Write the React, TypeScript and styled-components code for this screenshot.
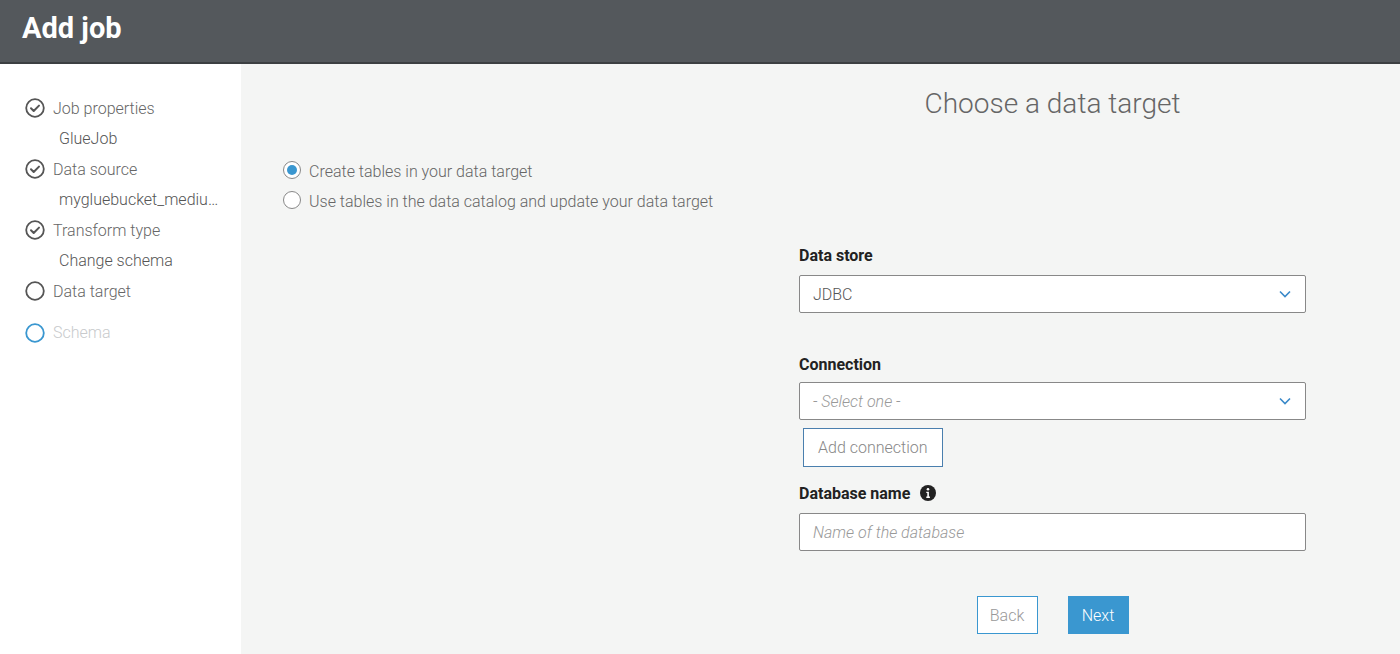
import styled, { createGlobalStyle } from 'styled-components'

const GlobalStyle = createGlobalStyle`
  html, body {
    margin: 0;
    padding: 0;
    background: #f4f5f4;
    font-family: Roboto, "Liberation Sans", sans-serif;
    font-weight: 300;
  }
`

const Page = styled.div`
  display: flex;
  flex-direction: column;
  height: 654px;
  overflow: hidden;
`

const Header = styled.header`
  display: flex;
  align-items: center;
  height: 62px;
  padding: 0 22px;
  background-color: #54585c;
  border-bottom: 2px solid #3c3f42;
  flex-shrink: 0;
`

const HeaderTitle = styled.h1`
  margin: 0 0 6px;
  font-size: 29px;
  font-weight: 700;
  color: #fff;
`

const Body = styled.div`
  display: flex;
  flex: 1;
`

const Sidebar = styled.nav`
  width: 241px;
  background: #fff;
  padding-top: 29px;
  flex-shrink: 0;
`

const StepList = styled.ul`
  list-style: none;
  margin: 0;
  padding: 0 0 0 25px;
`

const Step = styled.li<{ $active?: boolean }>`
  display: flex;
  align-items: center;
  gap: 8px;
  height: 30.5px;
  font-size: 16px;
  color: ${p => (p.$active ? '#c8cacc' : '#666')};
  margin-top: ${p => (p.$active ? '11px' : '0')};
`

const StepSub = styled.li`
  height: 30.5px;
  line-height: 30.5px;
  padding-left: 34px;
  font-size: 16px;
  color: #555;
  white-space: nowrap;
  overflow: hidden;
  text-overflow: ellipsis;
  width: 168px;
`

const Main = styled.main`
  flex: 1;
  padding-top: 22px;
`

const Column = styled.div`
  width: 507px;
  margin-left: 558px;
`

const Title = styled.h2`
  margin: 0;
  text-align: center;
  font-size: 28px;
  font-weight: 300;
  line-height: 36px;
  color: #666;
  white-space: nowrap;
`

const RadioGroup = styled.div`
  display: flex;
  flex-direction: column;
  padding: 34px 0 0 42px;
`

const RadioRow = styled.label`
  display: flex;
  align-items: center;
  gap: 8px;
  height: 30px;
  font-size: 16px;
  color: #666;
`

const RadioDot = styled.span<{ $checked?: boolean }>`
  box-sizing: border-box;
  width: 18px;
  height: 18px;
  border-radius: 50%;
  border: 1px solid #888;
  background: #fff;
  display: flex;
  align-items: center;
  justify-content: center;
  margin-top: -2px;
  &::after {
    content: '';
    width: 10px;
    height: 10px;
    border-radius: 50%;
    background: ${p => (p.$checked ? '#3a97d0' : 'transparent')};
  }
`

const Form = styled(Column)`
  padding-top: 29px;
`

const Field = styled.div<{ $gap?: number }>`
  margin-bottom: ${p => p.$gap ?? 0}px;
`

const Label = styled.div<{ $mb?: number }>`
  display: flex;
  align-items: center;
  gap: 10px;
  font-size: 16px;
  font-weight: 700;
  color: #222;
  height: 20px;
  margin-bottom: ${p => p.$mb ?? 10}px;
`

const Box = styled.div<{ $placeholder?: boolean }>`
  box-sizing: border-box;
  display: flex;
  align-items: center;
  justify-content: space-between;
  height: 38px;
  padding: 0 14px 0 13px;
  background: #fff;
  border: 1px solid #888;
  border-radius: 2px;
  font-size: 16px;
  color: ${p => (p.$placeholder ? '#999' : '#555')};
  font-style: ${p => (p.$placeholder ? 'italic' : 'normal')};
`

const OutlineButton = styled.button`
  box-sizing: border-box;
  height: 39px;
  padding: 0 14px;
  margin: 8px 0 0 4px;
  background: #fff;
  border: 1px solid #4a7fae;
  font-family: inherit;
  font-weight: 300;
  font-size: 16px;
  color: #888;
`

const Actions = styled.div`
  display: flex;
  justify-content: center;
  gap: 30px;
  margin-top: 45px;
`

const ActionButton = styled.button<{ $primary?: boolean }>`
  box-sizing: border-box;
  width: 61px;
  height: 38px;
  border: 1px solid #3a97d0;
  background: ${p => (p.$primary ? '#3a97d0' : '#fff')};
  color: ${p => (p.$primary ? '#fff' : '#999')};
  font-family: inherit;
  font-weight: 300;
  font-size: 16px;
`

const CheckCircle = () => (
  <svg width="20" height="20" viewBox="0 0 20 20">
    <circle cx="10" cy="10" r="8.8" fill="none" stroke="#555" strokeWidth="1.8" />
    <path d="M6 10.3l2.7 2.7 5.3-5.4" fill="none" stroke="#555" strokeWidth="2" strokeLinecap="round" strokeLinejoin="round" />
  </svg>
)

const EmptyCircle = ({ color }: { color: string }) => (
  <svg width="20" height="20" viewBox="0 0 20 20">
    <circle cx="10" cy="10" r="8.8" fill="none" stroke={color} strokeWidth="1.8" />
  </svg>
)

const Chevron = () => (
  <svg width="12" height="8" viewBox="0 0 12 8">
    <path d="M1 1.5l5 5 5-5" fill="none" stroke="#3a89c9" strokeWidth="1.6" />
  </svg>
)

const InfoIcon = () => (
  <svg width="16" height="16" viewBox="0 0 16 16">
    <circle cx="8" cy="8" r="8" fill="#222" />
    <circle cx="8" cy="4.3" r="1.3" fill="#fff" />
    <path d="M6.3 6.7h2.6v4.9h1v1.4H6.3v-1.4h1v-3.5h-1z" fill="#fff" />
  </svg>
)

export default function App() {
  return (
    <Page>
      <GlobalStyle />
      <Header>
        <HeaderTitle>Add job</HeaderTitle>
      </Header>
      <Body>
        <Sidebar>
          <StepList>
            <Step><CheckCircle />Job properties</Step>
            <StepSub>GlueJob</StepSub>
            <Step><CheckCircle />Data source</Step>
            <StepSub>mygluebucket_medium_data</StepSub>
            <Step><CheckCircle />Transform type</Step>
            <StepSub>Change schema</StepSub>
            <Step><EmptyCircle color="#555" />Data target</Step>
            <Step $active><EmptyCircle color="#3a97d0" />Schema</Step>
          </StepList>
        </Sidebar>
        <Main>
          <Column>
            <Title>Choose a data target</Title>
          </Column>
          <RadioGroup>
            <RadioRow><RadioDot $checked />Create tables in your data target</RadioRow>
            <RadioRow><RadioDot />Use tables in the data catalog and update your data target</RadioRow>
          </RadioGroup>
          <Form>
            <Field $gap={41}>
              <Label>Data store</Label>
              <Box>JDBC<Chevron /></Box>
            </Field>
            <Field $gap={16}>
              <Label $mb={8}>Connection</Label>
              <Box $placeholder>- Select one -<Chevron /></Box>
              <OutlineButton>Add connection</OutlineButton>
            </Field>
            <Field>
              <Label>Database name <InfoIcon /></Label>
              <Box $placeholder>Name of the database</Box>
            </Field>
            <Actions>
              <ActionButton>Back</ActionButton>
              <ActionButton $primary>Next</ActionButton>
            </Actions>
          </Form>
        </Main>
      </Body>
    </Page>
  )
}
